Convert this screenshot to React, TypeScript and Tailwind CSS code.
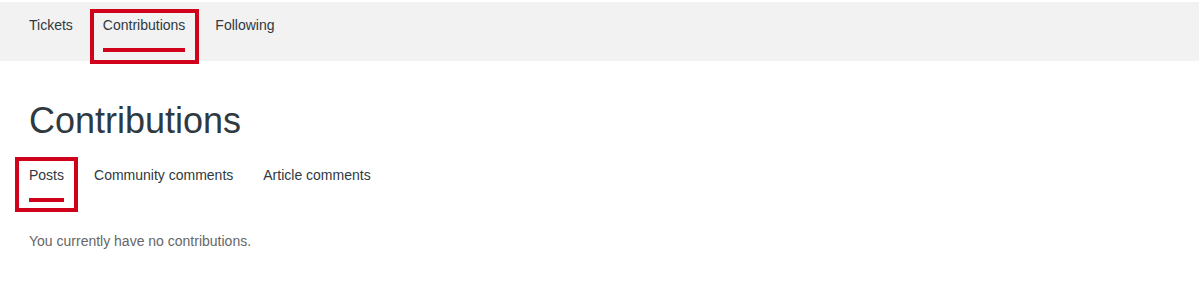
import React from 'react';

type TabProps = {
  label: string;
  active?: boolean;
  boxed?: string; // classes for the red highlight box offsets
};

function Tab({ label, active, boxed }: TabProps) {
  return (
    <li className="relative flex flex-col">
      <span className="text-[14px] leading-5 text-[#2f3941] whitespace-nowrap">{label}</span>
      {active ? <span className="mt-[13px] h-[4px] bg-[#d0021b]" /> : <span className="mt-[13px] h-[4px]" />}
      {/* annotation highlight */}
      {boxed && <span className={`absolute border-[4px] border-[#d0021b] ${boxed}`} aria-hidden="true" />}
    </li>
  );
}

export default function App() {
  return (
    <div className="min-h-[299px] w-full bg-white font-['Liberation_Sans',Arial,sans-serif]">
      {/* Account nav bar */}
      <nav className="mt-[2px] mr-[1px] h-[59px] bg-[#f2f2f2] pl-[29px] pt-[13px]">
        <ul className="flex gap-[30px]">
          <Tab label="Tickets" />
          <Tab label="Contributions" active boxed="-left-[13px] -right-[14px] -top-[6px] -bottom-[12px]" />
          <Tab label="Following" />
        </ul>
      </nav>

      <main className="pl-[29px]">
        <h1 className="mt-[40px] text-[36px] leading-[40px] font-normal text-[#2f3941]">Contributions</h1>

        <ul className="mt-[24px] flex gap-[30px]">
          <Tab label="Posts" active boxed="-left-[14px] -right-[14px] -top-[8px] -bottom-[10px]" />
          <Tab label="Community comments" />
          <Tab label="Article comments" />
        </ul>

        <p className="mt-[29px] text-[14px] leading-5 text-[#666]">You currently have no contributions.</p>
      </main>
    </div>
  );
}
